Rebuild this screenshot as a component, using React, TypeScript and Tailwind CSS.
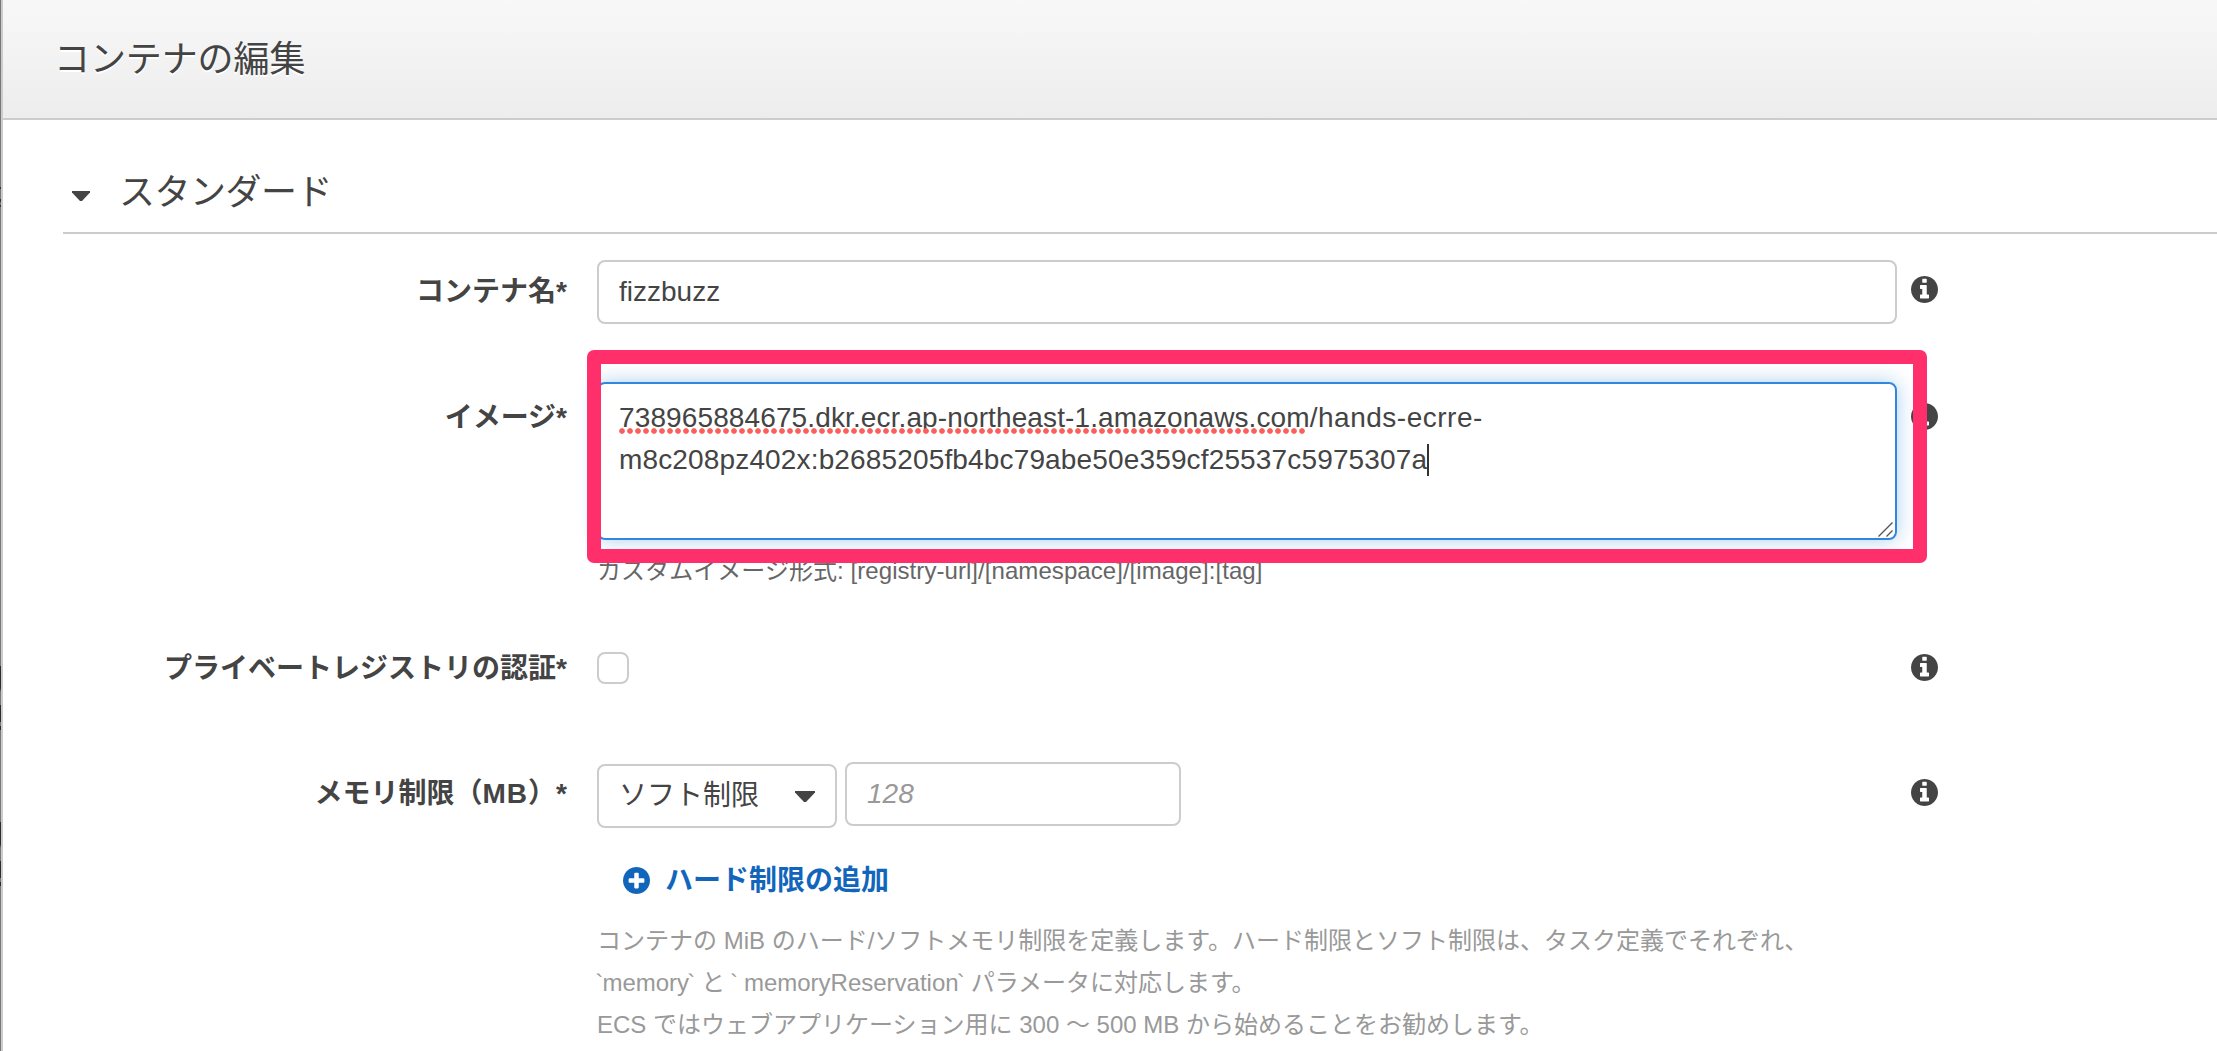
import type { ReactNode } from "react";

const DISC =
  "M1664 896q0 209-103 385.5t-279.5 279.5-385.5 103-385.5-103-279.5-279.5-103-385.5 103-385.5 279.5-279.5 385.5-103 385.5 103 279.5 279.5 103 385.5z";

function InfoIcon({ className = "" }: { className?: string }) {
  return (
    <svg viewBox="128 128 1536 1536" className={`h-[27px] w-[27px] shrink-0 fill-[#444] ${className}`}>
      <path
        d={
          "M1152 1376v-160q0-14-9-23t-23-9h-96v-512q0-14-9-23t-23-9h-320q-14 0-23 9t-9 23v160q0 14 9 23t23 9h96v320h-96q-14 0-23 9t-9 23v160q0 14 9 23t23 9h448q14 0 23-9t9-23zM1024 480v-160q0-14-9-23t-23-9h-192q-14 0-23 9t-9 23v160q0 14 9 23t23 9h192q14 0 23-9t9-23z" +
          DISC
        }
        fillRule="evenodd"
      />
    </svg>
  );
}

function PlusIcon() {
  return (
    <svg viewBox="128 128 1536 1536" className="h-[27px] w-[27px] shrink-0 fill-[#1166bb]">
      <path
        d={
          "M1344 960v-128q0-26-19-45t-45-19h-256v-256q0-26-19-45t-45-19h-128q-26 0-45 19t-19 45v256h-256q-26 0-45 19t-19 45v128q0 26 19 45t45 19h256v256q0 26 19 45t45 19h128q26 0 45-19t19-45v-256h256q26 0 45-19t19-45z" +
          DISC
        }
        fillRule="evenodd"
      />
    </svg>
  );
}

function Tick() {
  return <span className="-ml-[1.8px] tracking-[-0.8px]">`</span>;
}

function Row({
  label,
  labelClass,
  iconClass,
  className,
  children,
}: {
  label: ReactNode;
  labelClass: string;
  iconClass: string;
  className: string;
  children: ReactNode;
}) {
  return (
    <div className={`flex items-start ${className}`}>
      <div className={`w-[564px] shrink-0 text-right text-[28px] leading-[42px] font-bold ${labelClass}`}>{label}</div>
      <div className="ml-[30px] w-[1300px] shrink-0">{children}</div>
      <InfoIcon className={`ml-[14.4px] ${iconClass}`} />
    </div>
  );
}

export default function App() {
  return (
    <div className="flex h-[1051px] w-[2217px] overflow-hidden bg-white font-['Liberation_Sans','Noto_Sans_CJK_JP',sans-serif] whitespace-nowrap text-[#444]">
      <div className="w-px shrink-0 bg-[linear-gradient(to_bottom,#777_0_187px,#333_187px_189px,#777_189px_199px,#333_199px_202px,#777_202px_205px,#333_205px_207px,#777_207px_666px,#2c2a2b_666px_688px,#777_692px_705px,#2c2a2b_705px_722px,#777_722px_726px,#2c2a2b_726px_730px,#777_730px_822px,#2c2a2b_822px_844px,#777_848px_861px,#2c2a2b_861px_878px,#777_878px_882px,#2c2a2b_882px_886px,#777_886px)]" />
      <div className="w-[2214px] grow border-l-2 border-[#ccc]">
        <header className="flex h-[120px] items-start border-b-2 border-[#ccc] bg-linear-to-b from-[#f8f8f8] to-[#ededed] pt-[33px] pl-[51px]">
          <h1 className="text-[36px] leading-[54px] tracking-[-0.1px] [text-shadow:0_2px_0_#fff]">コンテナの編集</h1>
        </header>

        <main>
          <div className="ml-[60px] flex h-[114px] items-start border-b-2 border-[#ccc]">
            <svg viewBox="0 0 18 10" className="mt-[71px] ml-[9px] h-[10px] w-[18px] fill-[#444]">
              <path d="M0 0H18V1.5L10 10H8L0 1.5Z" />
            </svg>
            <h2 className="mt-[46px] ml-[29px] text-[36px] leading-[54px] tracking-[-0.5px]">スタンダード</h2>
          </div>

          <Row label="コンテナ名*" labelClass="mt-[11px]" iconClass="mt-[16px]" className="mt-[26px]">
            <div className="h-[64px] rounded-[8px] border-2 border-[#ccc] pl-[20px] text-[28px] leading-[60px]">
              fizzbuzz
            </div>
          </Row>

          <Row label="イメージ*" labelClass="mt-[15px]" iconClass="mt-[20.5px]" className="mt-[58px]">
            <div className="relative h-[158px] rounded-[8px] border-2 border-[#3186dd] pt-[13px] pl-[20px] text-[28px] leading-[42px] shadow-[0_0_20px_rgba(49,134,221,0.4)]">
              <p>
                <span className="relative inline-block tracking-[0.12px]">
                  738965884675.dkr.ecr.ap-northeast-1.amazonaws.com
                  <span className="absolute top-[31px] left-0 h-[6px] w-[688px] bg-[radial-gradient(circle_at_3px_3px,#f8605c_0_2.4px,transparent_3.2px)] bg-[length:8px_6px]" />
                </span>
                <span className="tracking-[0.5px]">/hands-ecrre-</span>
              </p>
              <p className="flex tracking-[0.15px]">
                m8c208pz402x:b2685205fb4bc79abe50e359cf25537c5975307a
                <span className="mt-[5px] h-[32px] w-[2px] bg-[#333]" />
              </p>
              <svg viewBox="0 0 15 15" className="absolute right-[2px] bottom-[1px] h-[15px] w-[15px] stroke-[#555]" fill="none">
                <path d="M0.5 14.5L14.5 0.5M8.5 14.5L14.5 8.5" strokeWidth="1.4" />
              </svg>
              <div className="absolute -top-[34px] -left-[12px] h-[213px] w-[1340px] rounded-[7px] bg-[#ff2f6c] [clip-path:polygon(evenodd,0_0,100%_0,100%_100%,0_100%,0_0,14px_14px,14px_199px,1326px_199px,1326px_14px,14px_14px)]" />
            </div>
            <p className="mt-[10px] text-[24px] leading-[42px] tracking-[0.06px] text-[#666] [clip-path:inset(13px_0_0_0)]">
              カスタムイメージ形式: [registry-url]/[namespace]/[image]:[tag]
            </p>
          </Row>

          <Row label="プライベートレジストリの認証*" labelClass="-mt-[4px]" iconClass="mt-[1.5px]" className="mt-[60px]">
            <div className="h-[32px] w-[32px] rounded-[8px] border-2 border-[#ccc]" />
          </Row>

          <Row
            label={
              <>
                メモリ制限（<span className="tracking-[1px]">MB</span>）*
              </>
            }
            labelClass="mt-[11px]"
            iconClass="mt-[16.5px]"
            className="mt-[72px]"
          >
            <div className="flex items-start gap-[8px]">
              <div className="mt-[2px] flex h-[64px] w-[240px] rounded-[8px] border-2 border-[#ccc] pl-[20px]">
                <span className="text-[28px] leading-[60px]">ソフト制限</span>
                <svg viewBox="0 0 20 11" className="mt-[25px] ml-[36px] h-[11px] w-[20px] fill-[#444]">
                  <path d="M0 0H20V1.5L11 11H9L0 1.5Z" />
                </svg>
              </div>
              <div className="h-[64px] w-[336px] rounded-[8px] border-2 border-[#ccc] pl-[20px] text-[28px] leading-[60px] text-[#999] italic">
                128
              </div>
            </div>
            <div className="mt-[31px] ml-[26.4px] flex h-[42px] items-center text-[28px] leading-[42px] font-bold text-[#1166bb]">
              <PlusIcon />
              <span className="mt-[2px] ml-[14.6px]">ハード制限の追加</span>
            </div>
            <div className="mt-[19px] text-[24px] leading-[42px] text-[#999]">
              <p>コンテナの MiB のハード/ソフトメモリ制限を定義します。ハード制限とソフト制限は、タスク定義でそれぞれ、</p>
              <p>
                <Tick />
                memory
                <Tick /> と <Tick /> memoryReservation
                <Tick /> パラメータに対応します。
              </p>
              <p>ECS ではウェブアプリケーション用に 300 〜 500 MB から始めることをお勧めします。</p>
            </div>
          </Row>
        </main>
      </div>
    </div>
  );
}
